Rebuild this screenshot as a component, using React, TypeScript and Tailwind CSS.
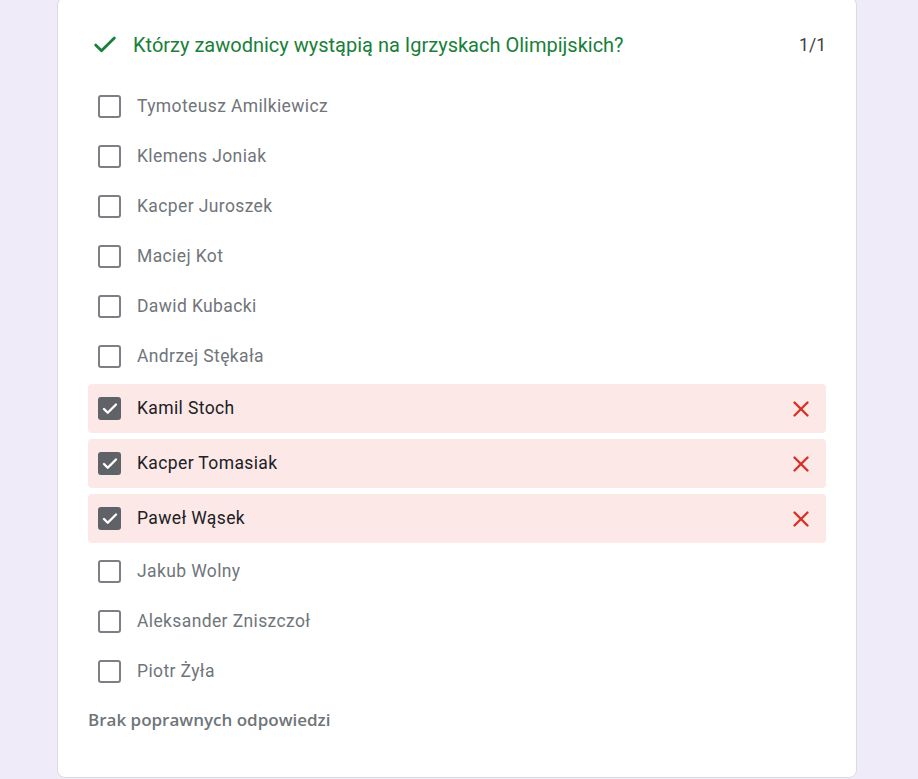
import { Check, X } from 'lucide-react';

type Option = { name: string; checked: boolean };

const options: Option[] = [
  { name: 'Tymoteusz Amilkiewicz', checked: false },
  { name: 'Klemens Joniak', checked: false },
  { name: 'Kacper Juroszek', checked: false },
  { name: 'Maciej Kot', checked: false },
  { name: 'Dawid Kubacki', checked: false },
  { name: 'Andrzej Stękała', checked: false },
  { name: 'Kamil Stoch', checked: true },
  { name: 'Kacper Tomasiak', checked: true },
  { name: 'Paweł Wąsek', checked: true },
  { name: 'Jakub Wolny', checked: false },
  { name: 'Aleksander Zniszczoł', checked: false },
  { name: 'Piotr Żyła', checked: false },
];

function Box({ checked }: { checked: boolean }) {
  if (checked) {
    return (
      <div className="w-[23px] h-[23px] rounded-[3px] bg-[#5f6368] flex items-center justify-center flex-shrink-0">
        <Check size={18} strokeWidth={3.2} className="text-white" />
      </div>
    );
  }
  return <div className="w-[23px] h-[23px] rounded-[3px] border-2 border-[#7c7f83] flex-shrink-0" />;
}

export default function App() {
  return (
    <div className="h-[779px] overflow-hidden bg-[#f0ebf8] pl-[57px] font-['Roboto',sans-serif]">
      <div className="w-[800px] h-[781px] -mt-[3px] bg-white border border-[#dadce0] rounded-lg px-[30px] pt-[32px]">
        {/* Header */}
        <div className="flex items-center h-[30px]">
          <Check size={28} strokeWidth={2.4} className="text-[#188038] ml-[3px] mr-[14px]" />
          <span className="text-[20px] text-[#188038] flex-1">
            Którzy zawodnicy wystąpią na Igrzyskach Olimpijskich?
          </span>
          <span className="text-[17.5px] text-[#3c4043]">1/1</span>
        </div>

        {/* Options */}
        <div className="mt-[21px] flex flex-col">
          {options.map((o, i) =>
            o.checked ? (
              <div
                key={i}
                className={`h-[49px] flex items-center px-[10px] rounded-[4px] bg-[#fce8e6] ${
                  i === 6 ? 'mt-[3px]' : 'mt-[6px]'
                } ${i === 8 ? 'mb-[3px]' : ''}`}
              >
                <Box checked />
                <span className="ml-[16px] text-[17.5px] tracking-[0.38px] text-[#202124] flex-1">{o.name}</span>
                <X size={26} strokeWidth={2.2} className="text-[#d93025] mr-[2px]" />
              </div>
            ) : (
              <div key={i} className="h-[50px] flex items-center px-[10px]">
                <Box checked={false} />
                <span className="ml-[16px] text-[17.5px] tracking-[0.38px] text-[#70757a]">{o.name}</span>
              </div>
            )
          )}
        </div>

        <div className="mt-[11px] font-['Open_Sans',sans-serif] text-[17px] font-semibold text-[#70757a]">
          Brak poprawnych odpowiedzi
        </div>
      </div>
    </div>
  );
}
